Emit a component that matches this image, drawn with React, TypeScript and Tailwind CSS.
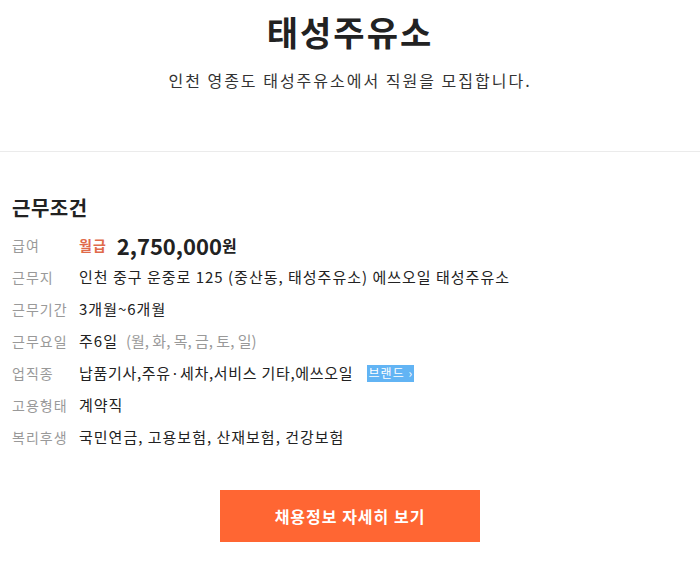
const font = { fontFamily: '"Noto Sans CJK KR", "Noto Sans", sans-serif' };

const rows: { label: string; value: React.ReactNode }[] = [
  { label: "근무지", value: "인천 중구 운중로 125 (중산동, 태성주유소) 에쓰오일 태성주유소" },
  { label: "근무기간", value: "3개월~6개월" },
  {
    label: "근무요일",
    value: (
      <>
        주6일 <span className="ml-2 tracking-normal text-[#999]">(월, 화, 목, 금, 토, 일)</span>
      </>
    ),
  },
  {
    label: "업직종",
    value: (
      <>
        <span className="tracking-[0.7px]">납품기사,주유·세차,서비스 기타,에쓰오일</span>
        <span className="ml-[14px] inline-flex h-[17px] w-[47px] items-center justify-center bg-[#62b4f4] text-[12px] leading-none tracking-[1px] text-white">
          브랜드 ›
        </span>
      </>
    ),
  },
  { label: "고용형태", value: "계약직" },
  { label: "복리후생", value: "국민연금, 고용보험, 산재보험, 건강보험" },
];

export default function App() {
  return (
    <div className="min-h-[581px] w-[700px] bg-white text-[#222]" style={font}>
      {/* Header */}
      <header className="flex h-[152px] flex-col items-center border-b border-[#ebebeb] pt-[12px]">
        <h1 className="text-[34px] font-bold leading-[40px] tracking-[2px] text-[#222]">태성주유소</h1>
        <p className="mt-4 text-[16px] leading-6 tracking-[2px] text-[#333]">
          인천 영종도 태성주유소에서 직원을 모집합니다.
        </p>
      </header>

      {/* 근무조건 */}
      <section className="px-3 pt-[42px]">
        <h2 className="text-[20px] font-bold leading-7 tracking-[0.5px]">근무조건</h2>
        <div className="mt-[7px] flex flex-col">
          <div className="flex h-8 items-center">
            <span className="w-[67px] shrink-0 text-[14px] tracking-[1px] text-[#999]">급여</span>
            <span className="text-[14px] font-bold tracking-[1px] text-[#e06a4a]">월급</span>
            <span className="ml-[10px] text-[22px] font-bold leading-none">2,750,000</span>
            <span className="text-[16px] font-bold">원</span>
          </div>
          {rows.map((r) => (
            <div key={r.label} className="flex h-8 items-center">
              <span className="w-[67px] shrink-0 text-[14px] tracking-[1px] text-[#999]">{r.label}</span>
              <span className="flex items-center text-[15px] tracking-[1px] text-[#222]">{r.value}</span>
            </div>
          ))}
        </div>
      </section>

      <div className="mt-[37px] flex justify-center">
        <button className="h-[52px] w-[260px] bg-[#ff6633] text-[16px] font-bold tracking-[1px] text-white">
          채용정보 자세히 보기
        </button>
      </div>
    </div>
  );
}
